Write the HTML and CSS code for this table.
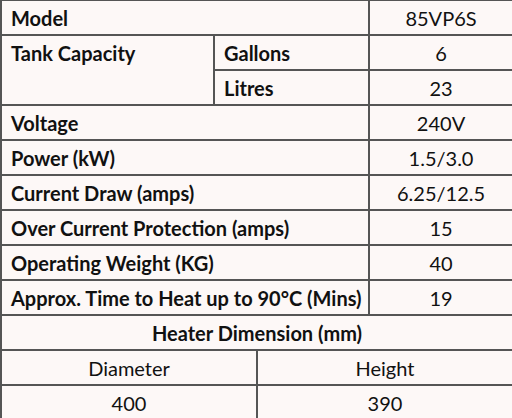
FILE: index.html
```html
<!DOCTYPE html>
<html>
<head>
<meta charset="utf-8">
<link rel="stylesheet" href="styles.css">
</head>
<body>
<table class="spec">
  <colgroup>
    <col class="c1"><col class="c2"><col class="c3"><col class="c4">
  </colgroup>
  <tr><td class="label" colspan="3">Model</td><td class="val">85VP6S</td></tr>
  <tr><td class="label top" rowspan="2">Tank Capacity</td><td class="label" colspan="2">Gallons</td><td class="val">6</td></tr>
  <tr><td class="label" colspan="2">Litres</td><td class="val">23</td></tr>
  <tr><td class="label" colspan="3">Voltage</td><td class="val">240V</td></tr>
  <tr><td class="label" colspan="3">Power (kW)</td><td class="val">1.5/3.0</td></tr>
  <tr><td class="label" colspan="3">Current Draw (amps)</td><td class="val">6.25/12.5</td></tr>
  <tr><td class="label" colspan="3">Over Current Protection (amps)</td><td class="val">15</td></tr>
  <tr><td class="label" colspan="3">Operating Weight (KG)</td><td class="val">40</td></tr>
  <tr><td class="label" colspan="3">Approx. Time to Heat up to 90°C (Mins)</td><td class="val">19</td></tr>
  <tr><td class="head" colspan="4">Heater Dimension (mm)</td></tr>
  <tr><td class="val" colspan="2">Diameter</td><td class="val" colspan="2">Height</td></tr>
  <tr><td class="val" colspan="2">400</td><td class="val" colspan="2">390</td></tr>
</table>
</body>
</html>
```
FILE: styles.css
```css
html, body {
  margin: 0;
  padding: 0;
  background: #fdf8f7;
}
body {
  width: 512px;
  height: 418px;
  overflow: hidden;
}
.spec {
  border-collapse: collapse;
  table-layout: fixed;
  width: 512px;
  margin-top: -1px;
  font-family: Lato, "Open Sans", sans-serif;
  font-size: 20px;
  color: #111;
}
.c1 { width: 213px; }
.c2 { width: 43px; }
.c3 { width: 112px; }
.c4 { width: 144px; }
.spec td {
  border: 2px solid #555;
  height: 33px;
  padding: 0 9px;
  vertical-align: middle;
  line-height: 22px;
  white-space: nowrap;
}
.label {
  font-weight: 700;
  text-align: left;
}
.top {
  vertical-align: top !important;
  padding-top: 6px !important;
}
.val {
  font-weight: 400;
  text-align: center;
}
.head {
  font-weight: 700;
  text-align: center;
}
```
